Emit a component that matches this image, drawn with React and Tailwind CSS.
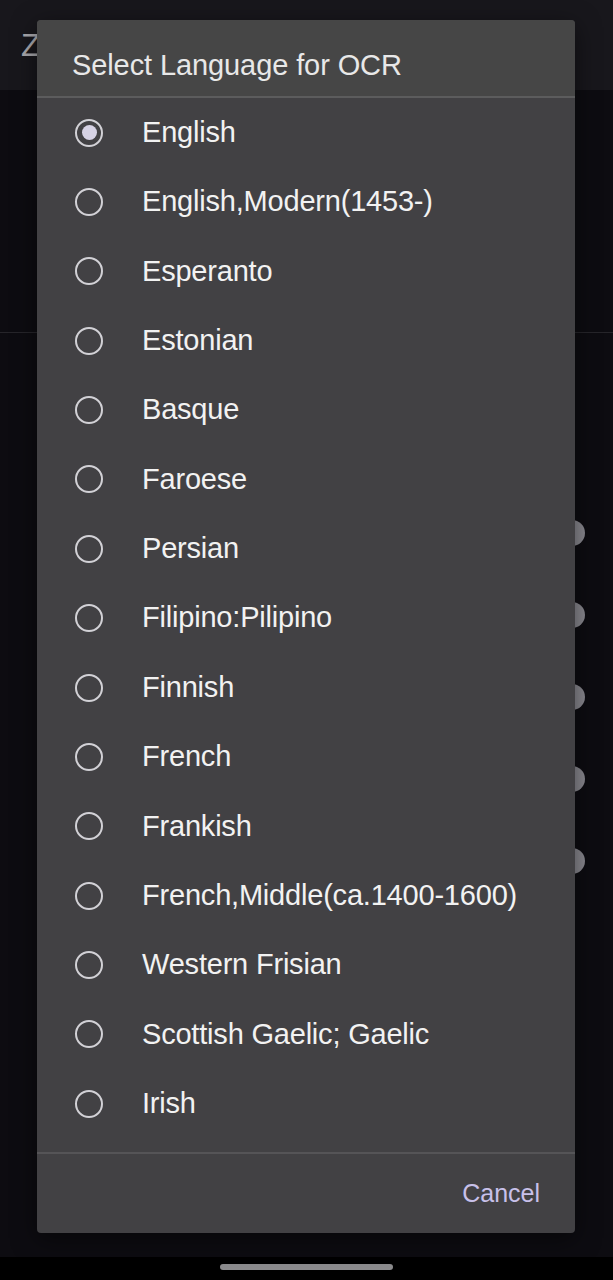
import React from 'react';

const languages = [
  'English',
  'English,Modern(1453-)',
  'Esperanto',
  'Estonian',
  'Basque',
  'Faroese',
  'Persian',
  'Filipino:Pilipino',
  'Finnish',
  'French',
  'Frankish',
  'French,Middle(ca.1400-1600)',
  'Western Frisian',
  'Scottish Gaelic; Gaelic',
  'Irish',
];

const knobs = [533, 615, 697, 779, 861];

const Radio = ({ checked }) => (
  <span className="grid h-[28px] w-[28px] shrink-0 place-items-center rounded-full border-[2.5px] border-[#d2d1d6]">
    {checked && <span className="h-[15px] w-[15px] rounded-full bg-[#d6d2e4]" />}
  </span>
);

export default function App() {
  return (
    <div className="relative h-[1280px] w-[613px] overflow-hidden bg-[#0d0c11] font-['Liberation_Sans',Arial,sans-serif]">
      {/* screen behind the dialog */}
      <div className="flex h-[90px] items-center bg-[#18171c] px-[21px]">
        <span className="text-[32px] text-[#a9a8ad]">Z</span>
      </div>
      <div className="h-[243px] border-b border-[#26252a]" />
      {knobs.map((y) => (
        <span
          key={y}
          className="absolute left-[559px] h-[26px] w-[26px] rounded-full bg-[#8a8990]"
          style={{ top: y - 13 }}
        />
      ))}
      <div className="absolute inset-x-0 bottom-0 flex h-[23px] justify-center bg-black pt-[7px]">
        <span className="h-[6px] w-[173px] rounded-full bg-[#8b8b8d]" />
      </div>

      {/* dialog */}
      <div className="absolute left-[37px] top-[20px] flex h-[1213px] w-[538px] flex-col overflow-hidden rounded-[4px] bg-[#424144] shadow-[0_6px_24px_rgba(0,0,0,.5)]">
        <div className="h-[78px] border-b-2 border-[#5c5c5d] bg-[#464646] px-[35px] pt-[31px]">
          <h2 className="text-[29px] leading-none tracking-[-0.1px] text-[#e8e8e8]">Select Language for OCR</h2>
        </div>
        <ul className="flex flex-col">
          {languages.map((name, i) => (
            <li key={name} className="flex h-[69.36px] items-center gap-[39px] pl-[38px]">
              <Radio checked={i === 0} />
              <span className="whitespace-nowrap text-[29px] tracking-[-0.2px] text-[#f2f2f2]">{name}</span>
            </li>
          ))}
        </ul>
        <div className="mt-auto flex h-[81px] items-center justify-end border-t-2 border-[#555457] pr-[35px]">
          <span className="text-[25px] text-[#c8c0ea]">Cancel</span>
        </div>
      </div>
    </div>
  );
}
